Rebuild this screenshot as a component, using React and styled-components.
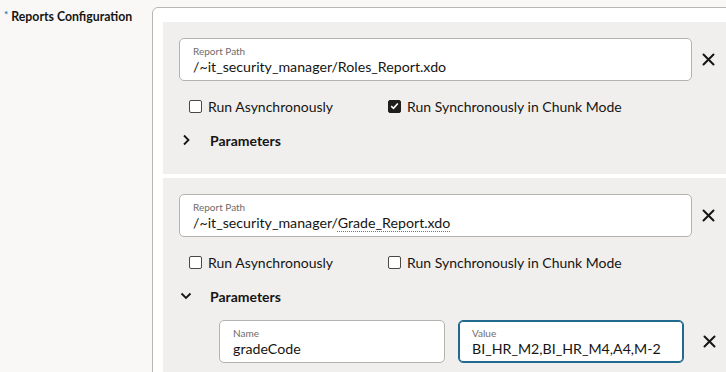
import React from "react";
import styled, { createGlobalStyle, css } from "styled-components";

const Global = createGlobalStyle`
  html, body { margin: 0; padding: 0; background: #f9f8f6; overflow: hidden; }
  body { font-family: Lato, "Noto Sans", sans-serif; color: #161513; }
  * { box-sizing: border-box; }
`;

const Page = styled.div`
  display: flex;
  width: 726px;
  height: 372px;
  overflow: hidden;
`;

const FieldLabel = styled.div`
  width: 152px;
  flex: none;
  padding: 9px 0 0 4px;
  font-size: 12.3px;
  font-weight: 700;
  color: #161513;
  display: flex;
  align-items: flex-start;
  gap: 3px;
`;

const Req = styled.span`
  color: #2a7aa8;
  font-size: 10px;
  line-height: 12px;
  margin-top: -1px;
`;

const Container = styled.div`
  flex: 1;
  margin-top: 7px;
  margin-right: -12px;
  background: #fff;
  border: 1px solid #b8b6b2;
  border-radius: 6px;
  padding: 14px 0 0 10px;
  display: flex;
  flex-direction: column;
  gap: 4px;
  min-height: 420px;
`;

const Panel = styled.div`
  background: #f1efed;
  padding: 16px 13px 22px 16px;
  display: flex;
  flex-direction: column;
`;

const InputRow = styled.div`
  display: flex;
  align-items: center;
`;

const TextField = styled.div`
  flex: ${(p) => (p.$w ? "none" : "1")};
  width: ${(p) => (p.$w ? `${p.$w}px` : "auto")};
  height: 43px;
  background: #fff;
  border: 1px solid ${(p) => (p.$focus ? "#22698f" : "#b4b2ae")};
  ${(p) =>
    p.$focus &&
    css`
      box-shadow: inset 0 0 0 1px #22698f;
    `}
  border-radius: 5px;
  padding: 6px 0 0 13px;
  display: flex;
  flex-direction: column;
`;

const SmallLabel = styled.span`
  font-size: 10px;
  line-height: 12px;
  color: #6f6c69;
`;

const Value = styled.span`
  font-size: 14.2px;
  line-height: 19px;
  color: #161513;
`;

const Spell = styled.span`
  text-decoration: underline dotted #d94a4a;
  text-decoration-thickness: 1px;
  text-underline-offset: 3px;
`;

const IconButton = styled.button`
  flex: none;
  width: ${(p) => p.$size || 32}px;
  height: 32px;
  border: none;
  background: transparent;
  display: flex;
  align-items: center;
  justify-content: center;
  padding: 0;
  color: #161513;
`;

const CheckRow = styled.div`
  display: flex;
  align-items: center;
  height: 24px;
  margin-top: 13px;
  padding-left: 10px;
`;

const CheckItem = styled.label`
  display: flex;
  align-items: center;
  gap: 6px;
  width: ${(p) => p.$w || "auto"};
  font-size: 14px;
`;

const Box = styled.span`
  width: 13px;
  height: 13px;
  border-radius: 2px;
  border: 1.5px solid ${(p) => (p.$checked ? "#1f1e1c" : "#4a4845")};
  background: ${(p) => (p.$checked ? "#1f1e1c" : "#fff")};
  display: flex;
  align-items: center;
  justify-content: center;
`;

const ParamHeader = styled.div`
  display: flex;
  align-items: center;
  height: 24px;
  margin-top: 10px;
  font-size: 14px;
  font-weight: 700;
  gap: 18px;
`;

const Chevron = styled.span`
  width: 13px;
  display: flex;
  justify-content: center;
`;

const ParamRow = styled.div`
  display: flex;
  align-items: center;
  gap: 13px;
  margin-top: 12px;
  padding-left: 40px;
`;

const XIcon = () => (
  <svg width="13" height="13" viewBox="0 0 13 13">
    <path d="M1.5 1.5 L11.5 11.5 M11.5 1.5 L1.5 11.5" stroke="#161513" strokeWidth="2" strokeLinecap="round" />
  </svg>
);

const Check = () => (
  <svg width="9" height="8" viewBox="0 0 9 8">
    <path d="M1.2 4.2 L3.5 6.3 L7.8 1.5" stroke="#fff" strokeWidth="1.6" fill="none" />
  </svg>
);

const ChevronRight = () => (
  <svg width="8" height="12" viewBox="0 0 8 12">
    <path d="M2 1.5 L6.5 6 L2 10.5" stroke="#161513" strokeWidth="1.8" fill="none" />
  </svg>
);

const ChevronDown = () => (
  <svg width="12" height="8" viewBox="0 0 12 8">
    <path d="M1.5 1.5 L6 6 L10.5 1.5" stroke="#161513" strokeWidth="1.8" fill="none" />
  </svg>
);

const Checkbox = ({ checked, label, w }) => (
  <CheckItem $w={w}>
    <Box $checked={checked}>{checked && <Check />}</Box>
    {label}
  </CheckItem>
);

const ReportPanel = ({ path, async, chunk, expanded, children }) => (
  <Panel>
    <InputRow>
      <TextField>
        <SmallLabel>Report Path</SmallLabel>
        <Value>{path}</Value>
      </TextField>
      <IconButton aria-label="Remove">
        <XIcon />
      </IconButton>
    </InputRow>
    <CheckRow>
      <Checkbox checked={async} label="Run Asynchronously" w="199px" />
      <Checkbox checked={chunk} label="Run Synchronously in Chunk Mode" />
    </CheckRow>
    <ParamHeader>
      <Chevron>{expanded ? <ChevronDown /> : <ChevronRight />}</Chevron>
      Parameters
    </ParamHeader>
    {children}
  </Panel>
);

export default function App() {
  return (
    <>
      <Global />
      <Page>
        <FieldLabel>
          <Req>*</Req>
          Reports Configuration
        </FieldLabel>
        <Container>
          <ReportPanel path="/~it_security_manager/Roles_Report.xdo" chunk />
          <ReportPanel
            path={
              <>
                /~it_security_manager/<Spell>Grade_Report.xdo</Spell>
              </>
            }
            expanded
          >
            <ParamRow>
              <TextField $w={226}>
                <SmallLabel>Name</SmallLabel>
                <Value>gradeCode</Value>
              </TextField>
              <TextField $w={226} $focus>
                <SmallLabel>Value</SmallLabel>
                <Value>BI_HR_M2,BI_HR_M4,A4,M-2</Value>
              </TextField>
              <IconButton $size={24} aria-label="Remove parameter">
                <XIcon />
              </IconButton>
            </ParamRow>
          </ReportPanel>
        </Container>
      </Page>
    </>
  );
}
